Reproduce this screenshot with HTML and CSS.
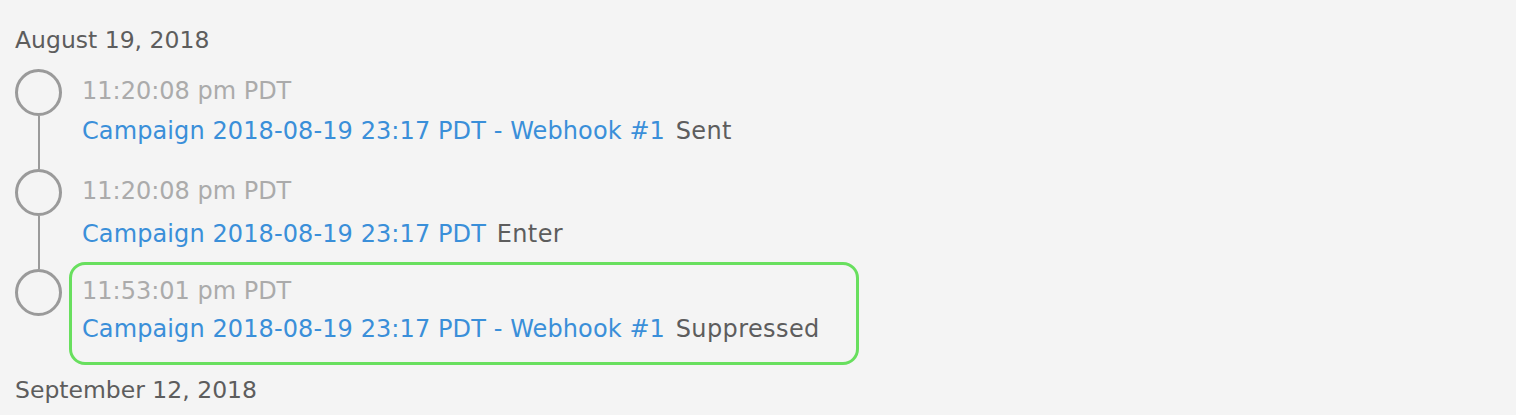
FILE: index.html
```html
<!DOCTYPE html>
<html lang="en">
<head>
<meta charset="utf-8">
<title>Activity</title>
<link rel="stylesheet" href="styles.css">
</head>
<body>
<main class="feed">
  <h2 class="day">August 19, 2018</h2>
  <ol class="timeline">
    <li class="event">
      <div class="rail"><span class="dot"></span><span class="line"></span></div>
      <div class="card">
        <div class="time">11:20:08 pm PDT</div>
        <div class="desc"><a class="link" href="#">Campaign 2018-08-19 23:17 PDT - Webhook #1</a> <span class="status">Sent</span></div>
      </div>
    </li>
    <li class="event">
      <div class="rail"><span class="dot"></span><span class="line"></span></div>
      <div class="card card--loose">
        <div class="time">11:20:08 pm PDT</div>
        <div class="desc"><a class="link" href="#">Campaign 2018-08-19 23:17 PDT</a> <span class="status">Enter</span></div>
      </div>
    </li>
    <li class="event">
      <div class="rail"><span class="dot"></span><span class="line"></span></div>
      <div class="card card--active">
        <div class="time">11:53:01 pm PDT</div>
        <div class="desc"><a class="link" href="#">Campaign 2018-08-19 23:17 PDT - Webhook #1</a> <span class="status">Suppressed</span></div>
      </div>
    </li>
  </ol>
  <h2 class="day day--next">September 12, 2018</h2>
</main>
</body>
</html>
```

FILE: styles.css
```css
html, body {
  margin: 0;
  padding: 0;
  background: #f4f4f4;
}

.feed {
  padding: 25px 0 0 15px;
  font-family: "DejaVu Sans", "Liberation Sans", sans-serif;
  font-size: 24px;
  line-height: 30px;
  color: #5d5d5d;
}

.day {
  margin: 0;
  font-size: 23.5px;
  font-weight: 400;
  line-height: 30px;
  color: #5d5d5d;
}

.day--next {
  margin-top: 6px;
}

.timeline {
  list-style: none;
  margin: 14px 0 0 0;
  padding: 0;
}

.event {
  display: flex;
  height: 100px;
}

.rail {
  width: 47px;
  flex: none;
  display: flex;
  flex-direction: column;
  align-items: center;
}

.dot {
  width: 47px;
  height: 47px;
  box-sizing: border-box;
  border: 3px solid #9a9a9a;
  border-radius: 50%;
  flex: none;
}

.line {
  width: 2px;
  flex: 1;
  background: #9a9a9a;
}

.event:last-child .line {
  display: none;
}

.card {
  box-sizing: border-box;
  width: 790px;
  height: 103px;
  margin: -7px 0 0 7px;
  padding: 11px 10px 0 10px;
  border: 3px solid transparent;
  border-radius: 16px;
  display: flex;
  flex-direction: column;
  gap: 10px;
}

.card--loose {
  gap: 13px;
}

.card--active {
  border-color: #68df5e;
  gap: 8px;
}

.time {
  color: #ababab;
  white-space: nowrap;
}

.desc {
  color: #5d5d5d;
  white-space: nowrap;
  letter-spacing: 0.1px;
}

.link {
  color: #3a8fd9;
  text-decoration: none;
}

.status {
  margin-left: 3px;
  letter-spacing: 0.4px;
}
```
